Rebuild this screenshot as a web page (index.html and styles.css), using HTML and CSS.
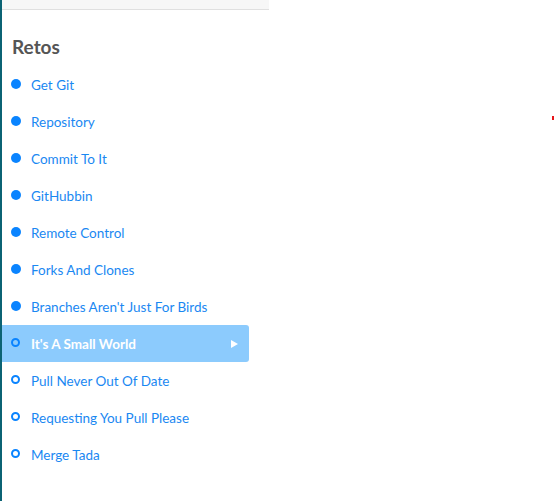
FILE: index.html
```html
<!DOCTYPE html>
<html>
<head>
<meta charset="utf-8">
<link rel="stylesheet" href="styles.css">
</head>
<body>
<div class="page">
  <aside class="sidebar">
    <div class="topbar"></div>
    <h2 class="title">Retos</h2>
    <ul class="list">
      <li class="item done"><span class="dot"></span><span class="label">Get Git</span></li>
      <li class="item done"><span class="dot"></span><span class="label">Repository</span></li>
      <li class="item done"><span class="dot"></span><span class="label">Commit To It</span></li>
      <li class="item done"><span class="dot"></span><span class="label">GitHubbin</span></li>
      <li class="item done"><span class="dot"></span><span class="label">Remote Control</span></li>
      <li class="item done"><span class="dot"></span><span class="label">Forks And Clones</span></li>
      <li class="item done"><span class="dot"></span><span class="label">Branches Aren't Just For Birds</span></li>
      <li class="item todo active"><span class="dot"></span><span class="label">It's A Small World</span><span class="arrow"></span></li>
      <li class="item todo"><span class="dot"></span><span class="label">Pull Never Out Of Date</span></li>
      <li class="item todo"><span class="dot"></span><span class="label">Requesting You Pull Please</span></li>
      <li class="item todo"><span class="dot"></span><span class="label">Merge Tada</span></li>
    </ul>
  </aside>
  <span class="marker"></span>
</div>
</body>
</html>
```

FILE: styles.css
```css
html, body {
  margin: 0;
  padding: 0;
  background: #ffffff;
}
body {
  font-family: "Lato", "Source Sans Pro", "Liberation Sans", sans-serif;
  width: 557px;
  height: 501px;
  overflow: hidden;
}
.page {
  position: relative;
  height: 501px;
  border-left: 2px solid #0b6374;
  box-sizing: border-box;
}
.sidebar {
  width: 267px;
}
.topbar {
  height: 9px;
  background: #f7f7f7;
  border-bottom: 1px solid #e0e0e0;
}
.title {
  margin: 26px 0 0 10px;
  font-size: 19px;
  line-height: 22px;
  font-weight: 700;
  color: #555555;
}
.list {
  list-style: none;
  margin: 8px 0 0 0;
  padding: 0;
}
.item {
  display: flex;
  align-items: center;
  height: 37px;
  width: 247px;
  box-sizing: border-box;
  padding-left: 9px;
  padding-right: 11px;
  font-size: 13.5px;
  color: #1a88f2;
  border-radius: 0 3px 3px 0;
}
.dot {
  width: 10px;
  height: 10px;
  border-radius: 50%;
  box-sizing: border-box;
  margin-right: 10px;
  flex: none;
  position: relative;
  top: -1px;
}
.done .dot {
  background: #0a84ff;
}
.todo .dot {
  border: 2px solid #0a84ff;
  width: 9px;
  height: 9px;
  margin-right: 11px;
}
.label {
  flex: 1;
}
.active {
  background: #8ccbfd;
  color: #ffffff;
  font-weight: 700;
}
.arrow {
  width: 0;
  height: 0;
  border-top: 4px solid transparent;
  border-bottom: 4px solid transparent;
  border-left: 7px solid #ffffff;
}
.marker {
  position: absolute;
  left: 550px;
  top: 116px;
  width: 2px;
  height: 4px;
  background: #e8161b;
}
```
